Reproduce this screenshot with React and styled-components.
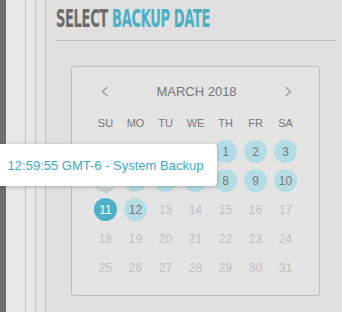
import React from "react";
import styled, { createGlobalStyle } from "styled-components";

const GlobalStyle = createGlobalStyle`
  html, body {
    margin: 0;
    padding: 0;
    background: #e0e0e0;
  }
  body {
    font-family: "Liberation Sans", Arial, sans-serif;
  }
`;

const Page = styled.div`
  display: flex;
  width: 342px;
  height: 312px;
  overflow: hidden;
  background: #e0e0e0;
`;

const Stripe = styled.div`
  width: 6px;
  flex: none;
  background: #6e6e6e;
`;

const Rail = styled.div`
  width: ${(p) => p.$w}px;
  flex: none;
  background: ${(p) => p.$bg};
  border-right: 1px solid #c3c3c3;
`;

const Main = styled.main`
  flex: 1;
  padding: 0 6px 0 10px;
  min-width: 0;
`;

const Header = styled.header`
  height: 40px;
  border-bottom: 1px solid #bcbcbc;
`;

const Title = styled.h1`
  margin: 0;
  padding-top: 5px;
  font-family: "DejaVu Sans Condensed", "DejaVu Sans", sans-serif;
  font-weight: bold;
  font-size: 25px;
  line-height: 28px;
  letter-spacing: -0.6px;
  white-space: nowrap;
  color: #6a6a6a;
  transform: scaleX(0.58);
  transform-origin: left center;
`;

const Accent = styled.span`
  color: #4aaec5;
`;

const Card = styled.section`
  margin: 25px 16px 0 15px;
  padding: 12px 0 13px;
  border: 1px solid #bcbcbc;
  border-radius: 3px;
  background: #e4e4e4;
`;

const MonthBar = styled.div`
  width: 213px;
  margin-left: 18px;
  height: 24px;
  display: flex;
  align-items: center;
  justify-content: space-between;
`;

const Arrow = styled.button`
  width: 30px;
  height: 24px;
  border: 0;
  padding: 0;
  background: none;
  display: flex;
  align-items: center;
  justify-content: center;
`;

const Month = styled.span`
  font-size: 13px;
  color: #767676;
`;

const Grid = styled.div`
  width: 210px;
  margin: 5px auto 0;
  display: grid;
  grid-template-columns: repeat(7, 30px);
  grid-auto-rows: 29px;
`;

const DayName = styled.div`
  display: flex;
  align-items: center;
  justify-content: center;
  font-size: 11px;
  color: #777;
`;

const Cell = styled.div`
  position: relative;
  display: flex;
  align-items: center;
  justify-content: center;
`;

const Day = styled.span`
  width: 23px;
  height: 23px;
  border-radius: 50%;
  display: flex;
  align-items: center;
  justify-content: center;
  font-size: 12px;
  color: ${(p) =>
    p.$state === "selected" ? "#fff" : p.$state === "backup" ? "#767676" : "#bfbfbf"};
  background: ${(p) =>
    p.$state === "selected" ? "#4eb0c6" : p.$state === "backup" ? "#b4dce4" : "transparent"};
`;

const Tooltip = styled.div`
  position: absolute;
  left: 50%;
  bottom: calc(100% + 9px);
  transform: translateX(-50%);
  z-index: 2;
  width: 222px;
  height: 42px;
  box-sizing: border-box;
  display: flex;
  align-items: center;
  justify-content: center;
  background: #fff;
  border-radius: 4px;
  box-shadow: 0 1px 4px rgba(0, 0, 0, 0.25);
  font-size: 13px;
  color: #3aa9cb;
  white-space: nowrap;

  &::after {
    content: "";
    position: absolute;
    top: 100%;
    left: 50%;
    margin-left: -8px;
    border: 8px solid transparent;
    border-bottom: 0;
    border-top-color: #c6c6c6;
  }
`;

const Chevron = ({ dir }) => (
  <svg width="8" height="11" viewBox="0 0 8 11">
    <polyline
      points={dir === "left" ? "6.5,1 1.5,5.5 6.5,10" : "1.5,1 6.5,5.5 1.5,10"}
      fill="none"
      stroke="#9a9a9a"
      strokeWidth="1.3"
    />
  </svg>
);

const dayNames = ["SU", "MO", "TU", "WE", "TH", "FR", "SA"];
const backups = [1, 2, 3, 4, 5, 6, 7, 8, 9, 10, 12];
const selected = 11;

function App() {
  const cells = [];
  for (let i = 0; i < 4; i++) cells.push(null);
  for (let d = 1; d <= 31; d++) cells.push(d);

  return (
    <Page>
      <GlobalStyle />
      <Stripe />
      <Rail $w={19} $bg="#e8e8e8" />
      <Rail $w={9} $bg="#e7e7e7" />
      <Rail $w={9} $bg="#e5e5e5" />
      <Main>
        <Header>
          <Title>
            SELECT <Accent>BACKUP DATE</Accent>
          </Title>
        </Header>
        <Card>
          <MonthBar>
            <Arrow>
              <Chevron dir="left" />
            </Arrow>
            <Month>MARCH 2018</Month>
            <Arrow>
              <Chevron dir="right" />
            </Arrow>
          </MonthBar>
          <Grid>
            {dayNames.map((n) => (
              <DayName key={n}>{n}</DayName>
            ))}
            {cells.map((d, i) => (
              <Cell key={i}>
                {d && (
                  <Day
                    $state={
                      d === selected ? "selected" : backups.includes(d) ? "backup" : "off"
                    }
                  >
                    {d}
                  </Day>
                )}
                {d === selected && (
                  <Tooltip>12:59:55 GMT-6 - System Backup</Tooltip>
                )}
              </Cell>
            ))}
          </Grid>
        </Card>
      </Main>
    </Page>
  );
}

export default App;
